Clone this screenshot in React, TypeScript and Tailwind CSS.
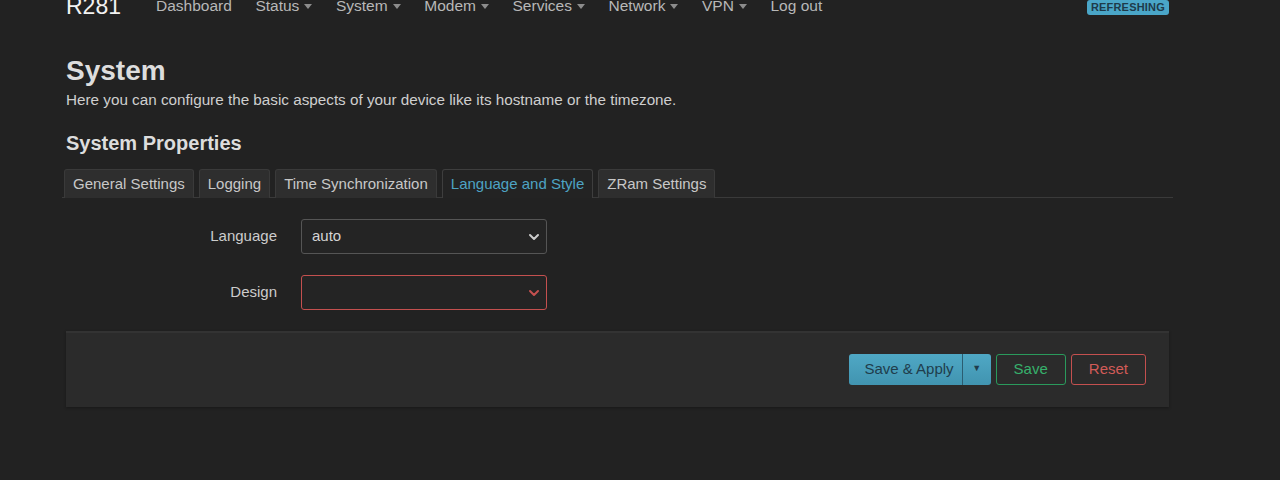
import React from 'react'
import { ChevronDown } from 'lucide-react'

const navItems = [
  { label: 'Dashboard', menu: false },
  { label: 'Status', menu: true },
  { label: 'System', menu: true },
  { label: 'Modem', menu: true },
  { label: 'Services', menu: true },
  { label: 'Network', menu: true },
  { label: 'VPN', menu: true },
  { label: 'Log out', menu: false },
]

const tabs = ['General Settings', 'Logging', 'Time Synchronization', 'Language and Style', 'ZRam Settings']

const Caret = () => (
  <span className="ml-[5px] inline-block h-0 w-0 border-x-[4px] border-t-[5px] border-x-transparent border-t-[#8c8c8c]" />
)

const App: React.FC = () => {
  return (
    <div className="min-h-[480px] w-[1280px] overflow-hidden bg-[#222222] font-['Liberation_Sans',Arial,sans-serif] text-[#cccccc]">
      {/* Header bar (scrolled partly out of view) */}
      <div className="-mt-[12px] flex h-[36px] items-center pl-[66px] pr-[111px]">
        <span className="text-[23px] leading-none text-[#f2f2f2]">R281</span>
        <nav className="ml-[35px] flex items-center gap-[23.6px] text-[15.5px] text-[#b8b8b8]">
          {navItems.map((item) => (
            <span key={item.label} className="flex items-center">
              {item.label}
              {item.menu && <Caret />}
            </span>
          ))}
        </nav>
        <span className="ml-auto mt-[3px] rounded-[3px] bg-[#4aa6c8] px-[4px] py-[1px] text-[11px] font-bold leading-[13px] tracking-[0.2px] text-[#1e3a4a]">
          REFRESHING
        </span>
      </div>

      <div className="ml-[66px] w-[1103px]">
        <h1 className="mt-[31px] text-[28px] font-bold leading-[32px] text-[#dddddd]">System</h1>
        <p className="mt-[4px] text-[15.25px] leading-[18px] text-[#cfcfcf]">
          Here you can configure the basic aspects of your device like its hostname or the timezone.
        </p>
        <h2 className="mt-[22px] text-[20px] font-bold leading-[24px] text-[#dddddd]">System Properties</h2>

        {/* Tabs */}
        <div className="-mx-[4px] mt-[14px] flex gap-[5px] border-b border-[#3a3a3a] pl-[2px]">
          {tabs.map((t) => {
            const active = t === 'Language and Style'
            return (
              <div
                key={t}
                className={`-mb-px rounded-t-[3px] border border-b-0 px-[8px] pb-[5px] pt-[5px] text-[15px] leading-[18px] ${
                  active
                    ? 'border-[#3e3e3e] bg-[#232323] text-[#4ea3c4]'
                    : 'border-[#3a3a3a] bg-[#2e2e2e] text-[#c8c8c8]'
                }`}
              >
                {t}
              </div>
            )
          })}
        </div>

        {/* Form */}
        <div className="mt-[21px] grid grid-cols-[211px_246px] items-center gap-x-[24px] gap-y-[21px]">
          <span className="text-right text-[15px] text-[#cccccc]">Language</span>
          <div className="flex h-[35px] items-center justify-between rounded-[3px] border border-[#555555] bg-[#242424] pl-[10px] pr-[4px] text-[15px] text-[#d4d4d4]">
            auto
            <ChevronDown className="h-[16px] w-[16px] text-[#cccccc]" strokeWidth={3} />
          </div>
          <span className="text-right text-[15px] text-[#cccccc]">Design</span>
          <div className="flex h-[35px] items-center justify-end rounded-[3px] border border-[#c4504f] bg-[#242424] pr-[4px]">
            <ChevronDown className="h-[16px] w-[16px] text-[#c4504f]" strokeWidth={3} />
          </div>
        </div>

        {/* Action footer */}
        <div className="mt-[21px] flex h-[76px] items-center justify-end gap-[5px] border-t-2 border-[#333333] bg-[#2b2b2b] pb-[2px] pr-[23px] shadow-[0_1px_3px_rgba(0,0,0,0.3)]">
          <div className="flex h-[31px] items-stretch rounded-[3px] bg-gradient-to-b from-[#4fa8c5] to-[#4194b0] text-[15px] text-[#1f3d4c]">
            <span className="flex items-center border-r border-[#2b5d71] pl-[15px] pr-[8px]">Save &amp; Apply</span>
            <span className="flex w-[28px] items-center justify-center text-[9px]">▼</span>
          </div>
          <div className="flex h-[31px] items-center rounded-[3px] border border-[#2a9a5c] px-[17px] text-[15px] text-[#37b06c]">
            Save
          </div>
          <div className="flex h-[31px] items-center rounded-[3px] border border-[#c4504f] px-[17px] text-[15px] text-[#d25b58]">
            Reset
          </div>
        </div>
      </div>
    </div>
  )
}

export default App
